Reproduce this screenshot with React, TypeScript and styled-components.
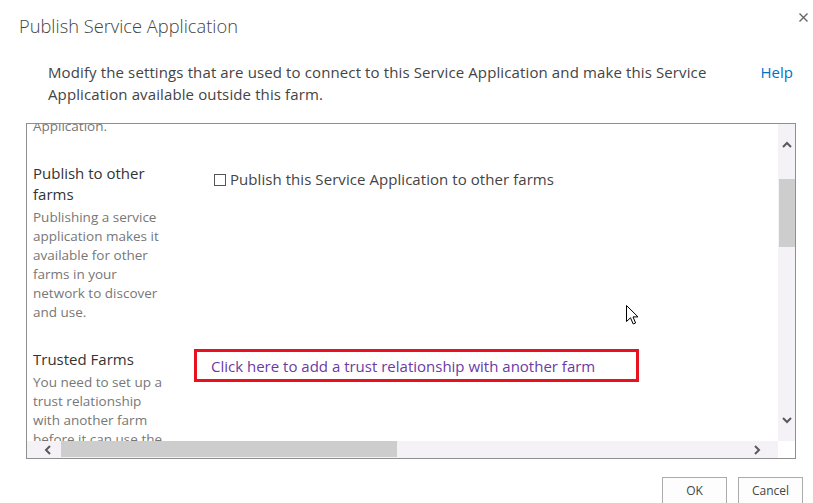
import styled, { createGlobalStyle } from "styled-components";

const GlobalStyle = createGlobalStyle`
  html, body {
    margin: 0;
    padding: 0;
    background: #fff;
  }
  body {
    font-family: "Open Sans", "Noto Sans", sans-serif;
    color: #444;
    overflow: hidden;
  }
`;

const Dialog = styled.div`
  position: relative;
  width: 813px;
  height: 503px;
  overflow: hidden;
  display: flex;
  flex-direction: column;
`;

const Header = styled.div`
  display: flex;
  justify-content: space-between;
  align-items: flex-start;
  padding: 13px 5px 0 19px;
`;

const Title = styled.h1`
  margin: 1px 0 0;
  font-size: 18.3px;
  font-weight: 300;
  line-height: 24px;
  color: #444;
`;

const CloseButton = styled.button`
  border: 0;
  background: none;
  padding: 0;
  width: 9px;
  height: 9px;
  display: flex;
  cursor: pointer;
`;

const Intro = styled.div`
  display: flex;
  align-items: flex-start;
  padding: 0 20px 0 48px;
  margin-top: 23px;
  font-size: 15px;
  line-height: 22px;
`;

const IntroText = styled.p`
  margin: 0;
  width: 690px;
  color: #444;
  letter-spacing: 0.12px;
`;

const HelpLink = styled.a`
  margin-left: auto;
  color: #0072c6;
  text-decoration: none;
`;

const Frame = styled.div`
  margin: 18px 17px 0 26px;
  height: 336px;
  box-sizing: border-box;
  border: 1px solid #8f8f8f;
  display: grid;
  grid-template-columns: 1fr 17px;
  grid-template-rows: 1fr 17px;
`;

const Viewport = styled.div`
  overflow: hidden;
`;

const Sheet = styled.div<{ $offset: number }>`
  margin-top: ${(p) => -p.$offset}px;
  display: flex;
  flex-direction: column;
  gap: 27px;
  width: 1500px;
`;

const Section = styled.div`
  display: grid;
  grid-template-columns: 133px 1fr;
  column-gap: 28px;
  padding-left: 6px;
`;

const Label = styled.div``;

const Heading = styled.h3`
  margin: 0;
  font-size: 15px;
  font-weight: 400;
  line-height: 21px;
  color: #333;
`;

const Hint = styled.p<{ $flush?: boolean }>`
  margin: ${(p) => (p.$flush ? "0" : "3px 0 0")};
  font-size: 13.5px;
  line-height: 19px;
  color: #777;
`;

const Control = styled.div<{ $pad: number }>`
  padding-top: ${(p) => p.$pad}px;
`;

const CheckLabel = styled.label`
  display: flex;
  align-items: center;
  padding-left: 20px;
  font-size: 15px;
  line-height: 21px;
  letter-spacing: 0.06px;
  color: #444;
`;

const CheckBox = styled.input`
  appearance: none;
  width: 12px;
  height: 12px;
  margin: 1px 4px 0 0;
  border: 1px solid #555;
  background: #fff;
  box-sizing: border-box;
`;

const TrustBox = styled.div`
  width: 445px;
  height: 33px;
  box-sizing: border-box;
  border: 3px solid #e8111f;
  padding: 1px 0 0 14px;
  display: flex;
  align-items: center;
`;

const TrustLink = styled.a`
  font-size: 15px;
  line-height: 21px;
  color: #6b3aa4;
  text-decoration: none;
`;

const VBar = styled.div`
  background: #f4f2f6;
  display: flex;
  flex-direction: column;
`;

const HBar = styled.div`
  background: #f4f2f6;
  display: flex;
  align-items: flex-start;
`;

const Corner = styled.div`
  background: #fff;
`;

const Arrow = styled.div<{ $vertical?: boolean }>`
  display: flex;
  align-items: center;
  justify-content: center;
  flex: none;
  ${(p) => (p.$vertical ? "height: 42px;" : "width: 42px; height: 17px;")}
`;

const VThumb = styled.div`
  margin: 13px 0 0 1px;
  height: 68px;
  background: #cdcdcd;
`;

const HThumb = styled.div`
  margin-left: -8px;
  width: 336px;
  height: 16px;
  background: #cdcdcd;
`;

const Filler = styled.div`
  flex: 1;
`;

const Footer = styled.div`
  display: flex;
  justify-content: flex-end;
  gap: 11px;
  padding: 18px 10px 0 0;
`;

const Button = styled.button`
  width: 65px;
  height: 30px;
  border: 1px solid #ababab;
  background: #fdfdfd;
  font-family: "Open Sans", "Noto Sans", sans-serif;
  font-size: 12px;
  color: #444;
  padding: 0 0 3px;
`;

const Pointer = styled.svg`
  position: absolute;
  left: 626px;
  top: 305px;
`;

const Chevron = ({ dir }: { dir: "up" | "down" | "left" | "right" }) => {
  const paths = {
    up: "M1 6 L5 2 L9 6",
    down: "M1 2 L5 6 L9 2",
    left: "M6 1 L2 5 L6 9",
    right: "M2 1 L6 5 L2 9",
  };
  const vertical = dir === "up" || dir === "down";
  return (
    <svg width={vertical ? 10 : 8} height={vertical ? 8 : 10} viewBox={vertical ? "0 0 10 8" : "0 0 8 10"}>
      <path d={paths[dir]} fill="none" stroke="#5a5a5a" strokeWidth="2" />
    </svg>
  );
};

export default function App() {
  return (
    <Dialog>
      <GlobalStyle />
      <Header>
        <Title>Publish Service Application</Title>
        <CloseButton aria-label="Close">
          <svg width="9" height="9" viewBox="0 0 9 9">
            <path d="M0.5 0.5 L8.5 8.5 M8.5 0.5 L0.5 8.5" stroke="#666" strokeWidth="1.4" />
          </svg>
        </CloseButton>
      </Header>

      <Intro>
        <IntroText>
          Modify the settings that are used to connect to this Service Application and make this Service
          Application available outside this farm.
        </IntroText>
        <HelpLink href="#">Help</HelpLink>
      </Intro>

      <Frame>
        <Viewport>
          <Sheet $offset={7}>
            <Section>
              <Label>
                <Hint $flush>Application.</Hint>
              </Label>
              <Control $pad={0} />
            </Section>
            <Section>
              <Label>
                <Heading>Publish to other farms</Heading>
                <Hint>
                  Publishing a service application makes it available for other farms in your network to
                  discover and use.
                </Hint>
              </Label>
              <Control $pad={6}>
                <CheckLabel>
                  <CheckBox type="checkbox" />
                  Publish this Service Application to other farms
                </CheckLabel>
              </Control>
            </Section>
            <Section>
              <Label>
                <Heading>Trusted Farms</Heading>
                <Hint>
                  You need to set up a trust relationship with another farm before it can use the
                  service application.
                </Hint>
              </Label>
              <Control $pad={0}>
                <TrustBox>
                  <TrustLink href="#">Click here to add a trust relationship with another farm</TrustLink>
                </TrustBox>
              </Control>
            </Section>
          </Sheet>
        </Viewport>
        <VBar>
          <Arrow $vertical>
            <Chevron dir="up" />
          </Arrow>
          <VThumb />
          <Filler />
          <Arrow $vertical>
            <Chevron dir="down" />
          </Arrow>
        </VBar>
        <HBar>
          <Arrow>
            <Chevron dir="left" />
          </Arrow>
          <HThumb />
          <Filler />
          <Arrow>
            <Chevron dir="right" />
          </Arrow>
        </HBar>
        <Corner />
      </Frame>

      <Footer>
        <Button>OK</Button>
        <Button>Cancel</Button>
      </Footer>

      <Pointer width="13" height="21" viewBox="0 0 13 21">
        <path
          d="M0.5 0.5 L0.5 16.5 L4.5 12.8 L7.2 19 L9.6 18 L7 11.9 L12 11.9 Z"
          fill="#fff"
          stroke="#000"
          strokeWidth="1"
          strokeLinejoin="miter"
        />
      </Pointer>
    </Dialog>
  );
}
